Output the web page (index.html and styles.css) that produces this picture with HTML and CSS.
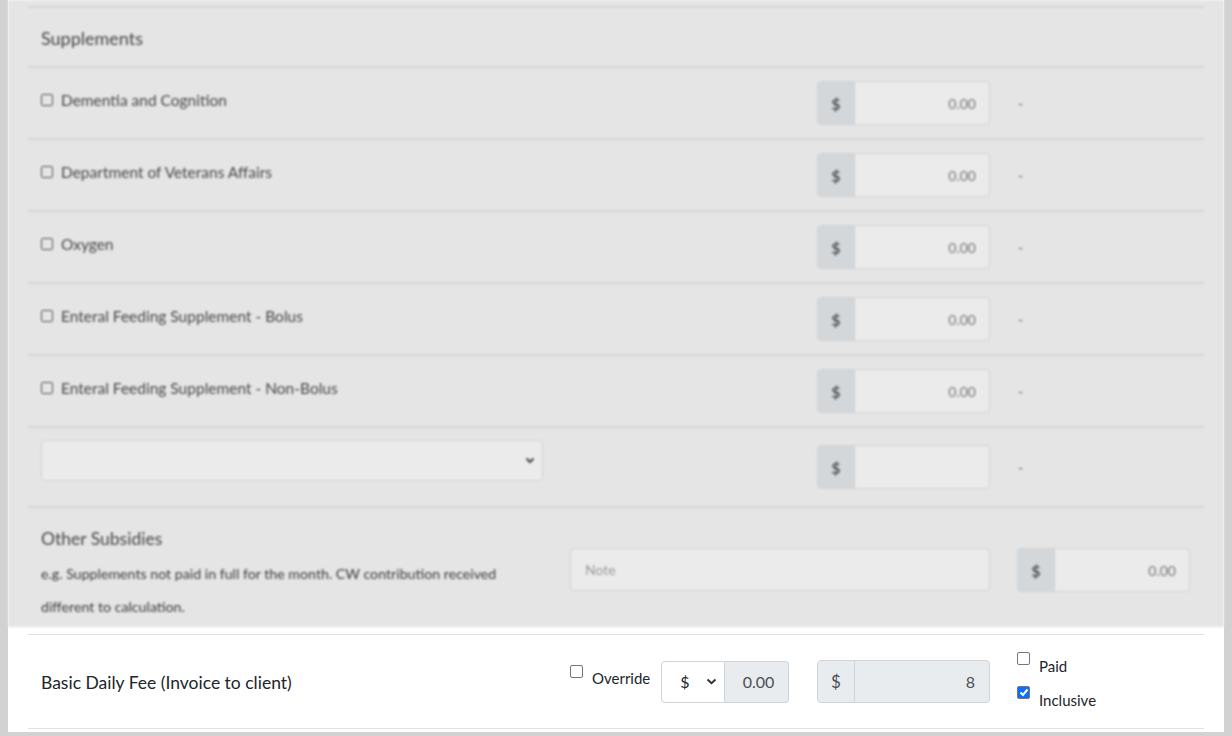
FILE: index.html
```html
<!DOCTYPE html>
<html lang="en">
<head>
    <meta charset="UTF-8">
    <title>Fees</title>
    <link rel="stylesheet" href="styles.css">
</head>
<body>
<div id="frame">
    <div class="dimmed">
        <div class="row head">
            <div class="cell">Supplements</div>
        </div>
        <div class="row item">
            <div class="cell"><label class="check"><span class="box"></span>Dementia and Cognition</label></div>
            <div class="cell"></div>
            <div class="cell"><div class="group"><span class="addon">$</span><span class="field">0.00</span></div></div>
            <div class="cell"><span class="dash">-</span></div>
        </div>
        <div class="row item">
            <div class="cell"><label class="check"><span class="box"></span>Department of Veterans Affairs</label></div>
            <div class="cell"></div>
            <div class="cell"><div class="group"><span class="addon">$</span><span class="field">0.00</span></div></div>
            <div class="cell"><span class="dash">-</span></div>
        </div>
        <div class="row item">
            <div class="cell"><label class="check"><span class="box"></span>Oxygen</label></div>
            <div class="cell"></div>
            <div class="cell"><div class="group"><span class="addon">$</span><span class="field">0.00</span></div></div>
            <div class="cell"><span class="dash">-</span></div>
        </div>
        <div class="row item">
            <div class="cell"><label class="check"><span class="box"></span>Enteral Feeding Supplement - Bolus</label></div>
            <div class="cell"></div>
            <div class="cell"><div class="group"><span class="addon">$</span><span class="field">0.00</span></div></div>
            <div class="cell"><span class="dash">-</span></div>
        </div>
        <div class="row item">
            <div class="cell"><label class="check"><span class="box"></span>Enteral Feeding Supplement - Non-Bolus</label></div>
            <div class="cell"></div>
            <div class="cell"><div class="group"><span class="addon">$</span><span class="field">0.00</span></div></div>
            <div class="cell"><span class="dash">-</span></div>
        </div>
        <div class="row picker">
            <div class="cell">
                <div class="select wide">
                    <span></span>
                    <svg width="10" height="7" viewBox="0 0 10 7"><path d="M1.5 1.5 5 5l3.5-3.5" fill="none" stroke="#444" stroke-width="2"/></svg>
                </div>
            </div>
            <div class="cell"></div>
            <div class="cell"><div class="group"><span class="addon">$</span><span class="field"></span></div></div>
            <div class="cell"><span class="dash">-</span></div>
        </div>
        <div class="row other">
            <div class="cell">
                <div class="title">Other Subsidies</div>
                <div class="hint">e.g. Supplements not paid in full for the month. CW contribution received different to calculation.</div>
            </div>
            <div class="cell span2"><div class="note">Note</div></div>
            <div class="cell"><div class="group"><span class="addon">$</span><span class="field">0.00</span></div></div>
        </div>
    </div>

    <div class="active">
        <div class="row fee">
            <div class="cell"><span class="fee-label">Basic Daily Fee (Invoice to client)</span></div>
            <div class="cell override">
                <label class="check light"><span class="box"></span>Override</label>
                <div class="pair">
                    <div class="select small">
                        <span>$</span>
                        <svg width="11" height="7" viewBox="0 0 11 7"><path d="M1.5 1.5 5.5 5.2l4-3.7" fill="none" stroke="#333" stroke-width="2"/></svg>
                    </div>
                    <span class="ro">0.00</span>
                </div>
            </div>
            <div class="cell"><div class="group light"><span class="addon">$</span><span class="field">8</span></div></div>
            <div class="cell flags">
                <label class="check light"><span class="box"></span>Paid</label>
                <label class="check light"><span class="box on"><svg width="10" height="9" viewBox="0 0 10 9"><path d="M1.5 4.5 4 7l4.5-5.5" fill="none" stroke="#fff" stroke-width="2"/></svg></span>Inclusive</label>
            </div>
        </div>
    </div>
</div>
</body>
</html>
```

FILE: styles.css
```css
body {
    margin: 0;
    height: 736px;
    overflow: hidden;
    background: #d2d2d2;
    font-family: Lato, "Noto Sans", sans-serif;
}

#frame {
    margin: 0 8px;
    height: 732px;
    background: #fff;
}

.dimmed {
    background: #e5e5e5;
    padding: 6px 20px 0;
    height: 627px;
    box-sizing: border-box;
    color: #474747;
    filter: blur(0.9px);
}

.row {
    display: grid;
    grid-template-columns: 529px 247px 200px 200px;
    border-top: 2px solid #d6d6d6;
    box-sizing: border-box;
}

.cell {
    padding: 0 14px 0 13px;
    display: flex;
    align-items: center;
}

.head {
    height: 60px;
    font-size: 18px;
}

.head .cell {
    padding-top: 1px;
    align-items: center;
}

.item {
    height: 72px;
}

.item .cell:first-child {
    padding-bottom: 6px;
}

.check {
    display: flex;
    align-items: center;
    font-size: 15.5px;
}

.box {
    width: 10px;
    height: 10px;
    border: 1.5px solid #555;
    border-radius: 2px;
    margin-right: 8px;
    display: inline-flex;
    align-items: center;
    justify-content: center;
}

.group {
    display: flex;
    width: 173px;
    height: 44px;
    border: 1px solid #d3d3d3;
    border-radius: 4px;
    box-sizing: border-box;
    overflow: hidden;
    background: #ebebeb;
}

.addon {
    width: 36px;
    background: #d4d7da;
    border-right: 1px solid #d0d0d0;
    display: flex;
    align-items: center;
    justify-content: center;
    font-size: 16px;
    font-weight: 700;
    color: #555;
}

.field {
    flex: 1;
    display: flex;
    align-items: center;
    justify-content: flex-end;
    padding-right: 13px;
    font-size: 14px;
    color: #777;
}

.dash {
    font-size: 14px;
    padding-left: 1px;
    color: #666;
}

.picker {
    height: 80px;
}

.picker .cell:first-child {
    align-items: flex-start;
    padding-top: 12px;
}

.select {
    display: flex;
    align-items: center;
    justify-content: space-between;
    box-sizing: border-box;
    border: 1px solid #d3d3d3;
    border-radius: 4px;
}

.select.wide {
    width: 503px;
    height: 41px;
    padding: 0 7px 0 12px;
    background: #ebebeb;
}

.other {
    height: 121px;
}

.other .cell {
    align-items: flex-start;
    padding-top: 40px;
}

.other .cell:first-child {
    flex-direction: column;
    padding-top: 19px;
}

.span2 {
    grid-column: span 2;
}

.title {
    font-size: 17.5px;
    line-height: 24px;
}

.hint {
    max-width: 480px;
    font-size: 14.2px;
    line-height: 33px;
    margin-top: 6px;
    color: #3a3a3a;
}

.note {
    width: 420px;
    height: 43px;
    box-sizing: border-box;
    border: 1px solid #d3d3d3;
    border-radius: 4px;
    background: #ebebeb;
    padding: 0 14px;
    display: flex;
    align-items: center;
    font-size: 14px;
    color: #9a9a9a;
}

.active {
    padding: 7px 20px 3px;
}

.fee {
    height: 95px;
    border-top: 1px solid #dee2e6;
    border-bottom: 1px solid #dee2e6;
    color: #212529;
}

.fee-label {
    font-size: 17.5px;
    margin-top: 2px;
}

.check.light {
    font-size: 15px;
    color: #212529;
}

.check.light .box {
    width: 11px;
    height: 11px;
    border: 1px solid #767676;
    border-radius: 2px;
    margin-right: 9px;
}

.override .check {
    align-items: flex-start;
    line-height: 28px;
    margin-top: -8px;
    margin-right: 11px;
}

.override .check .box {
    margin-top: 1px;
}

.pair {
    display: flex;
    height: 42px;
}

.select.small {
    width: 64px;
    height: 42px;
    padding: 0 7px 0 18px;
    background: #fff;
    border-color: #ced4da;
    border-radius: 4px 0 0 4px;
    font-size: 16px;
    color: #212529;
}

.ro {
    width: 64px;
    box-sizing: border-box;
    background: #e9ecef;
    border: 1px solid #ced4da;
    border-left: 0;
    border-radius: 0 4px 4px 0;
    display: flex;
    align-items: center;
    justify-content: flex-end;
    padding-right: 14px;
    font-size: 16px;
    color: #495057;
}

.group.light {
    height: 43px;
    border-color: #ced4da;
    background: #e9ecef;
}

.group.light .addon {
    background: #e9ecef;
    border-right-color: #ced4da;
    font-weight: 400;
    font-size: 17px;
    color: #495057;
}

.group.light .field {
    font-size: 16px;
    color: #495057;
    padding-right: 14px;
}

.flags {
    flex-direction: column;
    align-items: flex-start;
    justify-content: center;
    gap: 12px;
    padding-top: 3px;
}

.flags .check {
    align-items: flex-start;
    line-height: 22px;
}

.flags .check .box {
    margin-top: -3px;
}

.box.on {
    background: #0d6efd;
    border-color: #0d6efd;
}
```
